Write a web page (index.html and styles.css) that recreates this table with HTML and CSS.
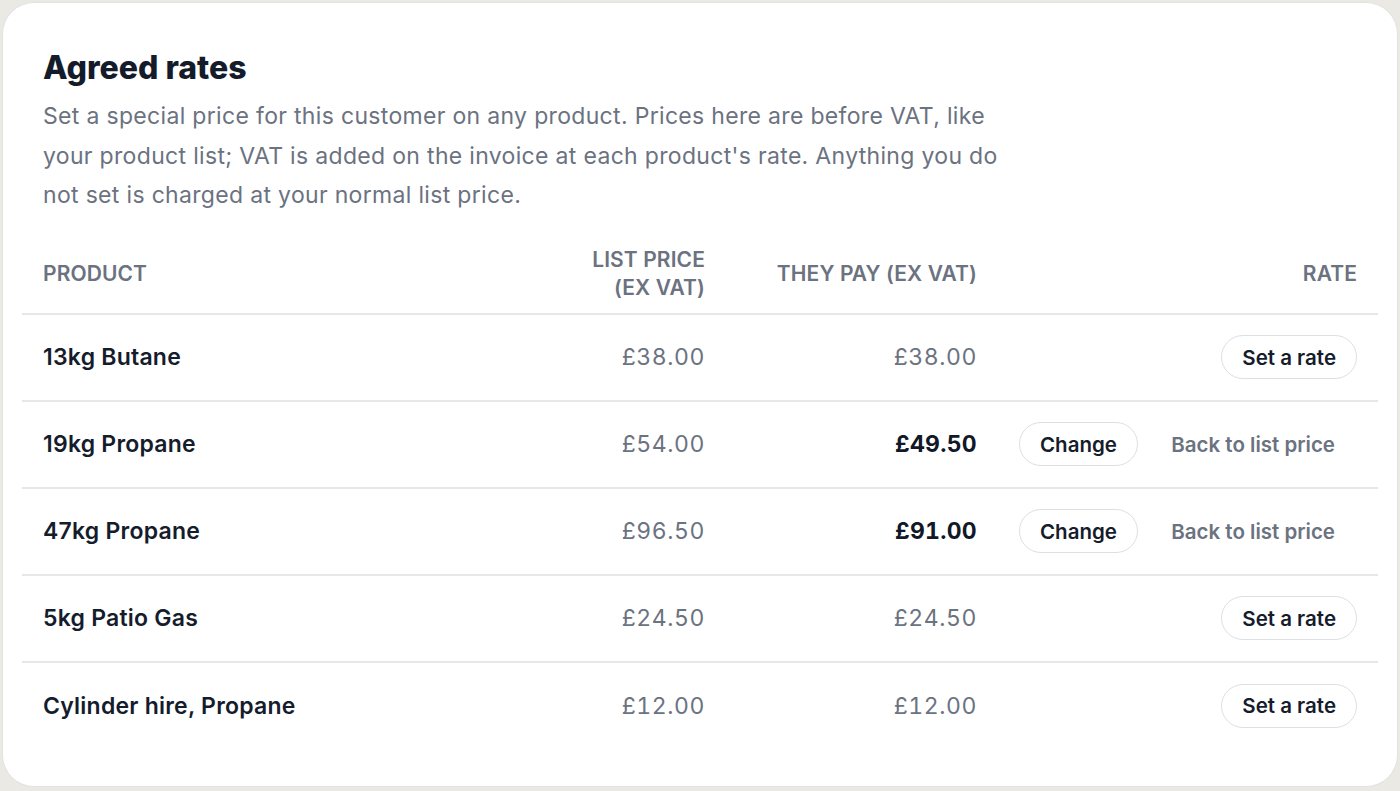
FILE: index.html
```html
<!DOCTYPE html>
<html lang="en">
<head>
<meta charset="utf-8">
<title>Agreed rates</title>
<link rel="stylesheet" href="styles.css">
</head>
<body>
<section class="card">
  <header class="card-head">
    <h1 class="title">Agreed rates</h1>
    <p class="desc">Set a special price for this customer on any product. Prices here are before VAT, like your product list; VAT is added on the invoice at each product's rate. Anything you do not set is charged at your normal list price.</p>
  </header>
  <table class="rates">
    <colgroup>
      <col class="c-product">
      <col class="c-list">
      <col class="c-pay">
      <col class="c-rate">
    </colgroup>
    <thead>
      <tr>
        <th class="left">Product</th>
        <th class="right">List price (ex VAT)</th>
        <th class="right">They pay (ex VAT)</th>
        <th class="right">Rate</th>
      </tr>
    </thead>
    <tbody>
      <tr>
        <td class="name">13kg Butane</td>
        <td class="price">£38.00</td>
        <td class="price">£38.00</td>
        <td class="rate"><div class="actions"><button class="pill">Set a rate</button></div></td>
      </tr>
      <tr>
        <td class="name">19kg Propane</td>
        <td class="price">£54.00</td>
        <td class="price strong">£49.50</td>
        <td class="rate"><div class="actions split"><button class="pill">Change</button><button class="link">Back to list price</button></div></td>
      </tr>
      <tr>
        <td class="name">47kg Propane</td>
        <td class="price">£96.50</td>
        <td class="price strong">£91.00</td>
        <td class="rate"><div class="actions split"><button class="pill">Change</button><button class="link">Back to list price</button></div></td>
      </tr>
      <tr>
        <td class="name">5kg Patio Gas</td>
        <td class="price">£24.50</td>
        <td class="price">£24.50</td>
        <td class="rate"><div class="actions"><button class="pill">Set a rate</button></div></td>
      </tr>
      <tr>
        <td class="name">Cylinder hire, Propane</td>
        <td class="price">£12.00</td>
        <td class="price">£12.00</td>
        <td class="rate"><div class="actions"><button class="pill">Set a rate</button></div></td>
      </tr>
    </tbody>
  </table>
</section>
</body>
</html>
```

FILE: styles.css
```css
* { box-sizing: border-box; }

html, body {
  margin: 0;
  padding: 0;
  height: 100%;
}

body {
  background: #ebe9e4;
  font-family: Inter, "Noto Sans", sans-serif;
  color: #151c2c;
  padding: 2px;
}

.card {
  background: #ffffff;
  border: 1px solid #e2e2e2;
  border-radius: 32px;
  height: 785px;
  width: 1396px;
  padding: 0 19px 0 19px;
}

.card-head {
  padding: 45px 21px 0 21px;
}

.title {
  margin: 0;
  font-size: 32px;
  line-height: 40px;
  font-weight: 800;
  letter-spacing: 0;
  color: #141b2b;
}

.desc {
  margin: 9px 0 0 0;
  max-width: 965px;
  font-size: 23px;
  line-height: 39.5px;
  letter-spacing: 0.014em;
  color: #6b7280;
}

.rates {
  width: 100%;
  border-collapse: collapse;
  table-layout: fixed;
  margin-top: 15px;
}

.c-product { width: auto; }
.c-list { width: 160px; }
.c-pay { width: 272px; }
.c-rate { width: 380px; }

.rates th {
  font-size: 21px;
  line-height: 28px;
  font-weight: 600;
  text-transform: uppercase;
  letter-spacing: 0.005em;
  color: #6b7280;
  padding: 15px 21px 11px 21px;
  vertical-align: middle;
  border-bottom: 2px solid #e6e7eb;
}

.rates th.left { text-align: left; }
.rates th.right { text-align: right; }

.rates td {
  padding: 20px 21px;
  height: 87px;
  vertical-align: middle;
  border-bottom: 2px solid #e6e7eb;
  font-size: 23px;
  line-height: 28px;
}

.rates tbody tr:last-child td { border-bottom: none; }

.name {
  font-weight: 600;
  color: #151c2c;
  letter-spacing: 0.01em;
}

.price {
  text-align: right;
  color: #6b7280;
  font-variant-numeric: tabular-nums;
  letter-spacing: 0.025em;
}

.price.strong {
  font-weight: 700;
  color: #111827;
  letter-spacing: 0.012em;
}

.actions {
  display: flex;
  justify-content: flex-end;
  align-items: center;
}

.actions.split {
  justify-content: space-between;
  padding-right: 22px;
}

.pill {
  font-family: inherit;
  font-size: 20.5px;
  font-weight: 600;
  color: #151c2c;
  background: #ffffff;
  border: 1.5px solid #dedfe2;
  border-radius: 22px;
  height: 44px;
  padding: 0 20px;
  cursor: pointer;
}

.link {
  font-family: inherit;
  font-size: 20.5px;
  font-weight: 600;
  color: #6b7280;
  background: none;
  border: none;
  padding: 0;
  cursor: pointer;
}
```
